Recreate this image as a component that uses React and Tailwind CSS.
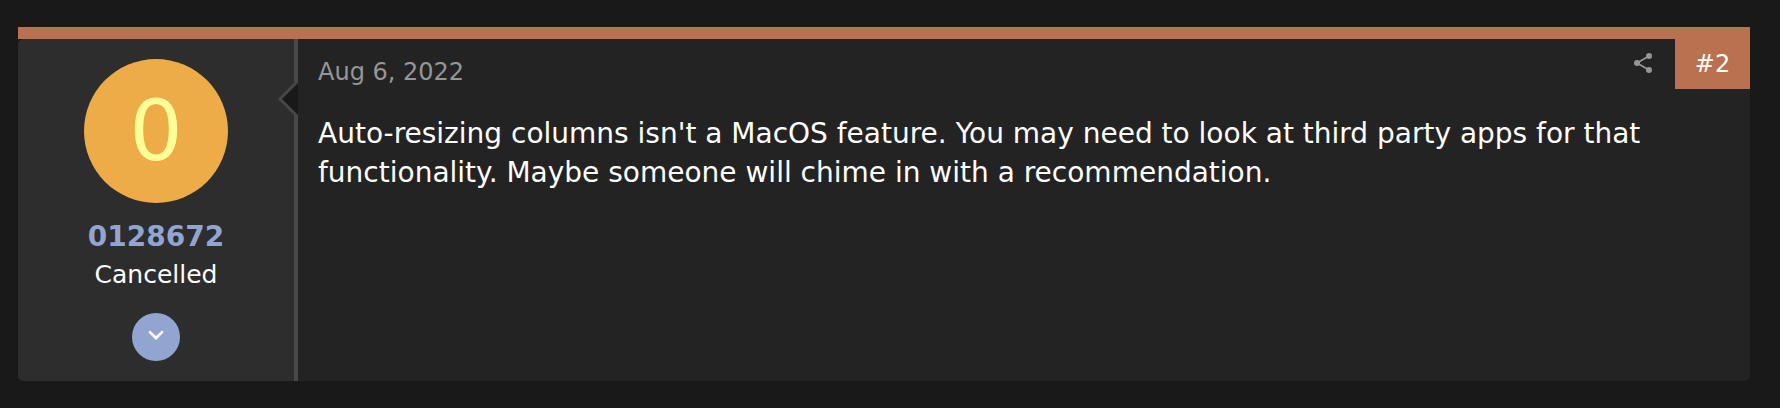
import { useState } from "react";

const post = {
  user: "0128672",
  title: "Cancelled",
  date: "Aug 6, 2022",
  number: "#2",
  message:
    "Auto-resizing columns isn't a MacOS feature. You may need to look at third party apps for that functionality. Maybe someone will chime in with a recommendation.",
};

function ShareIcon() {
  return (
    <svg viewBox="0 0 18 20" className="w-[18px] h-5" fill="currentColor" aria-hidden="true">
      <path d="M15 3 3 10l12 7" fill="none" stroke="currentColor" strokeWidth="1.8" />
      <circle cx="15" cy="3" r="3" />
      <circle cx="3" cy="10" r="3" />
      <circle cx="15" cy="17" r="3" />
    </svg>
  );
}

function ChevronIcon() {
  return (
    <svg viewBox="0 0 16 10" className="w-4 h-[10px]" fill="none" aria-hidden="true">
      <path d="M1.2 1.4 8 8l6.8-6.6" stroke="#fff" strokeWidth="2.7" />
    </svg>
  );
}

function UserCell() {
  const [open, setOpen] = useState(false);

  return (
    <aside className="relative w-[280px] shrink-0 flex flex-col items-center p-5 bg-[#2d2d2d] border-r-4 border-[#484848] rounded-l-md">
      <a
        href="#user"
        className="flex items-center justify-center w-36 h-36 rounded-full bg-[#edac47] text-[#ffff99] text-[84px] leading-none"
      >
        0
      </a>
      <h4 className="mt-4 text-[28px] leading-9 font-bold text-[#92a5d1]">
        <a href="#user">{post.user}</a>
      </h4>
      <h5 className="mt-0.5 text-[25px] leading-9 text-white">{post.title}</h5>
      <button
        type="button"
        aria-label="User details"
        aria-expanded={open}
        onClick={() => setOpen(!open)}
        className="mt-5 flex items-center justify-center w-12 h-12 pb-1 rounded-full bg-[#92a5d1] cursor-pointer"
      >
        <ChevronIcon />
      </button>

      {/* Arrow that points at the author */}
      <svg viewBox="0 0 20 40" className="absolute top-10 -right-1 w-5 h-10" aria-hidden="true">
        <path d="M20 0 0 20l20 20z" fill="#484848" />
        <path d="M20 4 4 20l16 16z" fill="#191919" />
      </svg>
    </aside>
  );
}

export default function App() {
  return (
    <main
      className="min-h-screen bg-[#191919] pt-[27px] pb-[27px] pl-[18px] pr-[30px] text-white"
      style={{ fontFamily: "Verdana, 'DejaVu Sans', sans-serif" }}
    >
      <div className="h-3 bg-[#b97150]" />
      <article className="flex min-h-[342px] rounded-md bg-[#232323]">
        <UserCell />

        <div className="flex-1 min-w-0 pl-5">
          <header className="flex items-start">
            <a href="#post" className="pt-[15px] text-2xl leading-9 text-[#969696]">
              <time dateTime="2022-08-06">{post.date}</time>
            </a>
            <a href="#share" aria-label="Share" className="ml-auto mr-[23px] pt-[14px] text-[#969696]">
              <ShareIcon />
            </a>
            <a
              href="#post"
              className="flex items-center justify-center w-[75px] h-[50px] bg-[#b97150] text-2xl"
            >
              {post.number}
            </a>
          </header>
          <p className="mt-6 pr-[75px] text-[28px] leading-[39px]">{post.message}</p>
        </div>
      </article>
    </main>
  );
}
